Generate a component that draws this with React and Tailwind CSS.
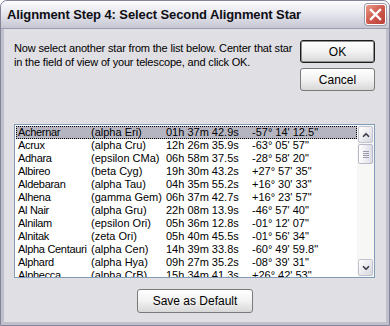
import { ChevronUp, ChevronDown } from 'lucide-react';

const stars = [
  ['Achernar', '(alpha Eri)', '01h 37m 42.9s', '-57° 14\' 12.5"'],
  ['Acrux', '(alpha Cru)', '12h 26m 35.9s', '-63° 05\' 57"'],
  ['Adhara', '(epsilon CMa)', '06h 58m 37.5s', '-28° 58\' 20"'],
  ['Albireo', '(beta Cyg)', '19h 30m 43.2s', '+27° 57\' 35"'],
  ['Aldebaran', '(alpha Tau)', '04h 35m 55.2s', '+16° 30\' 33"'],
  ['Alhena', '(gamma Gem)', '06h 37m 42.7s', '+16° 23\' 57"'],
  ['Al Nair', '(alpha Gru)', '22h 08m 13.9s', '-46° 57\' 40"'],
  ['Alnilam', '(epsilon Ori)', '05h 36m 12.8s', '-01° 12\' 07"'],
  ['Alnitak', '(zeta Ori)', '05h 40m 45.5s', '-01° 56\' 34"'],
  ['Alpha Centauri', '(alpha Cen)', '14h 39m 33.8s', '-60° 49\' 59.8"'],
  ['Alphard', '(alpha Hya)', '09h 27m 35.2s', '-08° 39\' 31"'],
  ['Alphecca', '(alpha CrB)', '15h 34m 41.3s', '+26° 42\' 53"'],
];

const font = { fontFamily: '"Liberation Sans", Arial, sans-serif' };

const XpButton = ({ children, className = '', focused = false }) => (
  <button
    className={`flex items-center justify-center rounded-[3px] border ${
      focused ? 'border-[#1c1c1c] shadow-[inset_0_0_0_1px_#8e8f8f]' : 'border-[#7a7a7a]'
    } bg-gradient-to-b from-[#ffffff] via-[#f2f2f2] to-[#d8d8d8] text-[12px] text-black ${className}`}
  >
    {children}
  </button>
);

export default function App() {
  return (
    <div className="w-[390px] h-[326px] bg-white" style={font}>
      <div className="w-full h-full flex flex-col bg-[#c0c0cc] border border-[#85859a] rounded-t-[7px] overflow-hidden">
        {/* title bar */}
        <div className="h-[28px] flex items-center justify-between pl-[6px] pr-[3px] bg-gradient-to-b from-[#fdfdfe] via-[#e4e4ec] to-[#c6c6d2] border-b border-[#9d9db0]">
          <span className="text-[13px] font-bold text-[#0e0e14] tracking-[-0.1px]">
            Alignment Step 4: Select Second Alignment Star
          </span>
          <div className="w-[21px] h-[21px] rounded-[3px] border border-white bg-gradient-to-br from-[#e99a88] via-[#d05a4d] to-[#b8403a] flex items-center justify-center shadow-[0_0_0_1px_#9a9aa8]">
            <svg width="13" height="13" viewBox="0 0 13 13">
              <path d="M2 2 L11 11 M11 2 L2 11" stroke="white" strokeWidth="2.4" strokeLinecap="square" />
            </svg>
          </div>
        </div>

        {/* body */}
        <div className="flex-1 mx-[3px] mb-[3px] bg-[#e0dfe3] flex flex-col px-[10px] pt-[11px]">
          <div className="flex justify-between">
            <p className="text-[11px] leading-[14px] text-black whitespace-nowrap pt-[1px] tracking-[-0.17px]">
              Now select another star from the list below. Center that star
              <br />
              in the field of view of your telescope, and click OK.
            </p>
            <div className="flex flex-col gap-[5px] mr-[1px]">
              <XpButton focused className="w-[75px] h-[23px]">OK</XpButton>
              <XpButton className="w-[75px] h-[23px]">Cancel</XpButton>
            </div>
          </div>

          {/* list */}
          <div className="mt-[33px] h-[154px] w-[361px] border border-[#7f9db9] bg-white flex overflow-hidden">
            <div className="flex-1 pt-[1px] pl-[1px] overflow-hidden">
              {stars.map(([name, bayer, ra, dec], i) => (
                <div
                  key={name}
                  className={`h-[13px] flex items-center text-[11px] leading-[13px] text-black whitespace-nowrap ${
                    i === 0 ? 'bg-[#b5b5c2] outline outline-1 outline-dotted outline-offset-[-1px] outline-black' : ''
                  }`}
                >
                  <span className="w-[75px] pl-[2px] tracking-[-0.3px]">{name}</span>
                  <span className="w-[75px]">{bayer}</span>
                  <span className="w-[86px]">{ra}</span>
                  <span>{dec}</span>
                </div>
              ))}
            </div>
            {/* scrollbar */}
            <div className="w-[17px] flex flex-col bg-[#f7f7f5] pt-[1px] pb-[1px]">
              <div className="h-[17px] mx-[1px] rounded-[2px] border border-[#c3c3cf] bg-gradient-to-br from-[#ffffff] to-[#d6d6e0] flex items-center justify-center">
                <ChevronUp className="w-[10px] h-[10px] text-[#3c3c4c]" strokeWidth={4} />
              </div>
              <div className="h-[20px] mt-[1px] mx-[1px] rounded-[2px] border border-[#b8b8c8] bg-gradient-to-r from-[#ffffff] to-[#dcdce6] flex flex-col items-center justify-center gap-[1px]">
                <div className="w-[6px] h-px bg-[#9a9aaa]" />
                <div className="w-[6px] h-px bg-[#9a9aaa]" />
                <div className="w-[6px] h-px bg-[#9a9aaa]" />
                <div className="w-[6px] h-px bg-[#9a9aaa]" />
              </div>
              <div className="flex-1" />
              <div className="h-[17px] mx-[1px] rounded-[2px] border border-[#c3c3cf] bg-gradient-to-br from-[#ffffff] to-[#d6d6e0] flex items-center justify-center">
                <ChevronDown className="w-[10px] h-[10px] text-[#3c3c4c]" strokeWidth={4} />
              </div>
            </div>
          </div>

          <div className="flex justify-center mt-[11px]">
            <XpButton className="w-[116px] h-[24px]">Save as Default</XpButton>
          </div>
        </div>
      </div>
    </div>
  );
}
